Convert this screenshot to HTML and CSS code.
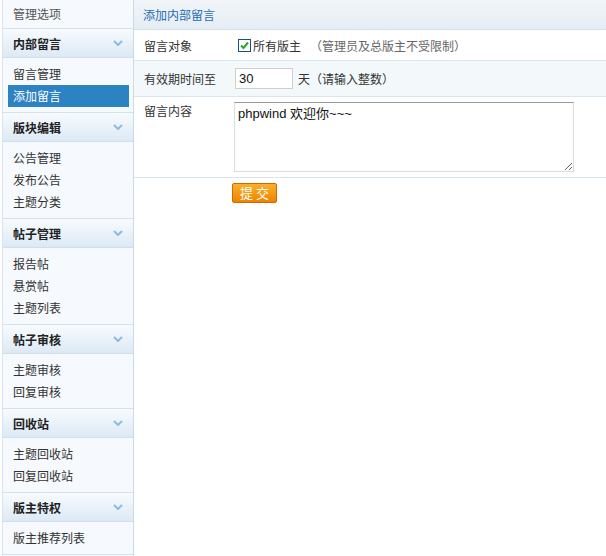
FILE: index.html
```html
<!DOCTYPE html>
<html lang="zh-CN">
<head>
<meta charset="utf-8">
<title>添加内部留言</title>
<link rel="stylesheet" href="styles.css">
</head>
<body>
<div class="page">
  <aside class="sidebar">
    <div class="side-top">管理选项</div>
    <div class="section">
      <div class="sec-head"><span>内部留言</span><svg class="chev" width="10" height="6" viewBox="0 0 10 6"><polyline points="1,1 5,5 9,1" fill="none" stroke="#8fbbdc" stroke-width="2"/></svg></div>
      <ul class="sec-list">
        <li>留言管理</li>
        <li class="active">添加留言</li>
      </ul>
    </div>
    <div class="section">
      <div class="sec-head"><span>版块编辑</span><svg class="chev" width="10" height="6" viewBox="0 0 10 6"><polyline points="1,1 5,5 9,1" fill="none" stroke="#8fbbdc" stroke-width="2"/></svg></div>
      <ul class="sec-list">
        <li>公告管理</li>
        <li>发布公告</li>
        <li>主题分类</li>
      </ul>
    </div>
    <div class="section">
      <div class="sec-head"><span>帖子管理</span><svg class="chev" width="10" height="6" viewBox="0 0 10 6"><polyline points="1,1 5,5 9,1" fill="none" stroke="#8fbbdc" stroke-width="2"/></svg></div>
      <ul class="sec-list">
        <li>报告帖</li>
        <li>悬赏帖</li>
        <li>主题列表</li>
      </ul>
    </div>
    <div class="section">
      <div class="sec-head"><span>帖子审核</span><svg class="chev" width="10" height="6" viewBox="0 0 10 6"><polyline points="1,1 5,5 9,1" fill="none" stroke="#8fbbdc" stroke-width="2"/></svg></div>
      <ul class="sec-list">
        <li>主题审核</li>
        <li>回复审核</li>
      </ul>
    </div>
    <div class="section">
      <div class="sec-head"><span>回收站</span><svg class="chev" width="10" height="6" viewBox="0 0 10 6"><polyline points="1,1 5,5 9,1" fill="none" stroke="#8fbbdc" stroke-width="2"/></svg></div>
      <ul class="sec-list">
        <li>主题回收站</li>
        <li>回复回收站</li>
      </ul>
    </div>
    <div class="section">
      <div class="sec-head"><span>版主特权</span><svg class="chev" width="10" height="6" viewBox="0 0 10 6"><polyline points="1,1 5,5 9,1" fill="none" stroke="#8fbbdc" stroke-width="2"/></svg></div>
      <ul class="sec-list">
        <li>版主推荐列表</li>
      </ul>
    </div>
  </aside>
  <main class="main">
    <div class="main-head">添加内部留言</div>
    <div class="row row-1">
      <div class="label">留言对象</div>
      <div class="value">
        <span class="checkbox"><svg width="11" height="11" viewBox="0 0 11 11"><polyline points="2,5.5 4.5,8 9,2.5" fill="none" stroke="#2aa52a" stroke-width="2"/></svg></span>
        <span class="cb-text">所有版主</span>
        <span class="note">（管理员及总版主不受限制）</span>
      </div>
    </div>
    <div class="row row-2">
      <div class="label">有效期时间至</div>
      <div class="value">
        <input class="days" type="text" value="30">
        <span class="unit">天（请输入整数）</span>
      </div>
    </div>
    <div class="row row-3">
      <div class="label">留言内容</div>
      <div class="value">
        <textarea class="content">phpwind 欢迎你~~~</textarea>
      </div>
    </div>
    <div class="actions">
      <button class="submit" type="button">提 交</button>
    </div>
  </main>
</div>
</body>
</html>
```
FILE: styles.css
```css
* { box-sizing: border-box; }
html, body { margin: 0; padding: 0; background: #fff; }
body {
  font-family: "Noto Sans CJK SC", "Liberation Sans", sans-serif;
  font-size: 12px;
  color: #333;
}
.page {
  display: flex;
  width: 606px;
  height: 556px;
  overflow: hidden;
}
.sidebar {
  width: 132px;
  margin-left: 2px;
  flex: none;
  background: #f6f9fd;
  border-left: 1px solid #d8e5f0;
  border-right: 1px solid #c9dbea;
}
.side-top {
  height: 29px;
  line-height: 28px;
  padding-left: 10px;
  color: #555;
  border-bottom: 1px solid #d3e2ee;
}
.sec-head {
  height: 29px;
  display: flex;
  align-items: center;
  justify-content: space-between;
  padding: 0 10px 0 10px;
  font-weight: bold;
  color: #222;
  background: linear-gradient(#f8fbfe, #dce9f5);
  border-bottom: 1px solid #cddeec;
}
.chev { display: block; }
.sec-list {
  list-style: none;
  margin: 0;
  padding: 5px 0 5px;
  border-bottom: 1px solid #d3e2ee;
}
.sec-list li {
  height: 22px;
  line-height: 22px;
  margin: 0 4px 0 5px;
  padding-left: 5px;
  color: #333;
}
.sec-list li.active {
  background: #2d82c3;
  color: #fff;
}
.main {
  flex: 1;
}
.main-head {
  height: 30px;
  line-height: 29px;
  padding-left: 9px;
  color: #1f6db5;
  background: linear-gradient(#f1f5f9, #e5edf4);
  border-bottom: 1px solid #d3e0ea;
}
.row {
  display: flex;
  border-bottom: 1px solid #dae6ef;
}
.row-1 { height: 31px; align-items: center; background: #fff; }
.row-2 { height: 36px; align-items: center; background: #f3f8fb; }
.row-3 { height: 81px; align-items: flex-start; background: #fff; }
.label {
  width: 100px;
  padding-left: 10px;
  flex: none;
  color: #333;
}
.row-3 .label { padding-top: 5px; }
.value {
  display: flex;
  align-items: center;
}
.checkbox {
  width: 13px;
  height: 13px;
  margin-left: 4px;
  border: 1px solid #1c4f7c;
  background: #fff;
  display: flex;
  align-items: center;
  justify-content: center;
}
.checkbox svg { display: block; }
.cb-text { margin-left: 2px; }
.note { margin-left: 9px; color: #666; }
.days {
  width: 58px;
  height: 21px;
  margin: 0 0 0 1px;
  padding: 0 3px;
  border: 1px solid #cfcfcf;
  font-family: "Liberation Sans", Arial, sans-serif;
  font-size: 13px;
  color: #111;
  background: #fff;
  outline: none;
}
.unit { margin-left: 5px; }
.content {
  width: 340px;
  height: 70px;
  margin: 5px 0 0 0;
  padding: 3px 3px;
  border: 1px solid #dcdcdc;
  border-top-color: #999;
  font-family: "Liberation Sans", "Noto Sans CJK SC", sans-serif;
  font-size: 13px;
  line-height: 16px;
  color: #111;
  resize: both;
}
.actions {
  padding: 5px 0 0 98px;
}
.submit {
  width: 45px;
  height: 20px;
  padding: 0;
  border: 1px solid #cf6a00;
  border-radius: 2px;
  background: linear-gradient(#fbb02c, #ee8400);
  color: #fff;
  font-family: "Noto Sans CJK SC", sans-serif;
  font-size: 13px;
  line-height: 18px;
  cursor: pointer;
}
```
